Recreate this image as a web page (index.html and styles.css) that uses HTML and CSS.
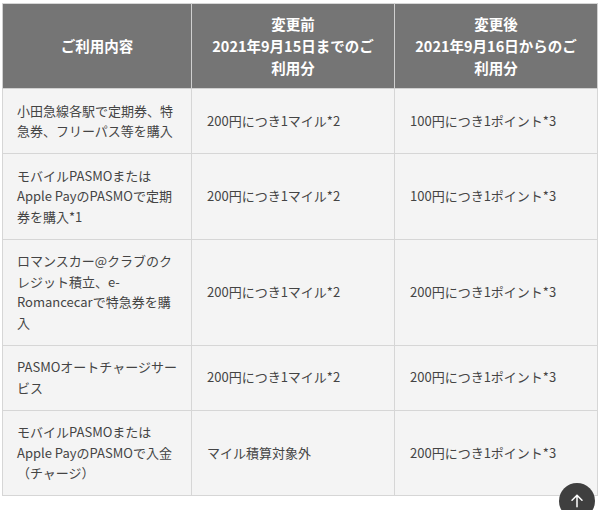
FILE: index.html
```html
<!DOCTYPE html>
<html lang="ja">
<head>
<meta charset="utf-8">
<link rel="stylesheet" href="styles.css">
</head>
<body>
<div class="wrap">
<table class="tbl">
  <colgroup>
    <col class="c1"><col class="c2"><col class="c3">
  </colgroup>
  <thead>
    <tr>
      <th>ご利用内容</th>
      <th>変更前<br>2021年9月15日までのご<br>利用分</th>
      <th>変更後<br>2021年9月16日からのご<br>利用分</th>
    </tr>
  </thead>
  <tbody>
    <tr>
      <td>小田急線各駅で定期券、特急券、フリーパス等を購入</td>
      <td>200円につき1マイル*2</td>
      <td>100円につき1ポイント*3</td>
    </tr>
    <tr>
      <td>モバイルPASMOまたは<br>Apple PayのPASMOで定期券を購入*1</td>
      <td>200円につき1マイル*2</td>
      <td>100円につき1ポイント*3</td>
    </tr>
    <tr>
      <td>ロマンスカー@クラブのクレジット積立、e-Romancecarで特急券を購入</td>
      <td>200円につき1マイル*2</td>
      <td>200円につき1ポイント*3</td>
    </tr>
    <tr>
      <td>PASMOオートチャージサービス</td>
      <td>200円につき1マイル*2</td>
      <td>200円につき1ポイント*3</td>
    </tr>
    <tr>
      <td>モバイルPASMOまたは<br>Apple PayのPASMOで入金<br>（チャージ）</td>
      <td>マイル積算対象外</td>
      <td>200円につき1ポイント*3</td>
    </tr>
  </tbody>
</table>
</div>
<a class="totop" href="#" aria-label="ページトップへ">
  <svg viewBox="0 0 24 24" width="20" height="20"><path d="M12 19V5M6 11L12 5l6 6" fill="none" stroke="#fff" stroke-width="1.8" stroke-linecap="round" stroke-linejoin="round"/></svg>
</a>
</body>
</html>
```
FILE: styles.css
```css
html, body {
  margin: 0;
  padding: 0;
  background: #fff;
}
body {
  font-family: "Noto Sans CJK JP", "Noto Sans", sans-serif;
  font-size: 13px;
  color: #444;
}
.wrap {
  padding: 3px 3px 0 2px;
}
.tbl {
  width: 595px;
  border-collapse: collapse;
  table-layout: fixed;
  border: 1px solid #d6d6d6;
}
.c1 { width: 189px; }
.c2 { width: 203px; }
.c3 { width: 203px; }
.tbl th {
  background: #757575;
  color: #fff;
  font-size: 14.5px;
  font-weight: bold;
  text-align: center;
  vertical-align: middle;
  line-height: 22px;
  padding: 9px 8px 9px;
  border: 1px solid #d0d0d0;
  border-top-color: #d6d6d6;
}
.tbl td {
  background: #f4f4f4;
  line-height: 20.5px;
  padding: 11.5px 14px 11.5px;
  vertical-align: middle;
  border: 1px solid #d6d6d6;
}
.tbl td + td {
  padding-left: 15px;
}
.totop {
  position: fixed;
  left: 559px;
  top: 483px;
  width: 36px;
  height: 36px;
  border-radius: 50%;
  background: #3f3f3f;
  display: flex;
  align-items: flex-start;
  justify-content: center;
}
.totop svg {
  margin-top: 8px;
}
```
